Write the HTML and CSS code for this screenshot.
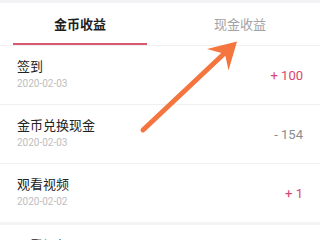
FILE: index.html
```html
<!DOCTYPE html>
<html lang="zh">
<head>
<meta charset="utf-8">
<link rel="stylesheet" href="styles.css">
</head>
<body>
<div class="page">
  <div class="top-gap"></div>
  <div class="tabs">
    <div class="tab active">金币收益</div>
    <div class="tab">现金收益</div>
  </div>
  <div class="list">
    <div class="row">
      <div class="info">
        <div class="title">签到</div>
        <div class="date">2020-02-03</div>
      </div>
      <div class="amount plus">+ 100</div>
    </div>
    <div class="row">
      <div class="info">
        <div class="title">金币兑换现金</div>
        <div class="date">2020-02-03</div>
      </div>
      <div class="amount minus">- 154</div>
    </div>
    <div class="row thick">
      <div class="info">
        <div class="title">观看视频</div>
        <div class="date">2020-02-02</div>
      </div>
      <div class="amount plus">+ 1</div>
    </div>
    <div class="row">
      <div class="info">
        <div class="title">观看视频</div>
        <div class="date">2020-02-02</div>
      </div>
      <div class="amount plus">+ 1</div>
    </div>
  </div>
  <svg class="arrow" width="320" height="240" viewBox="0 0 320 240">
    <line x1="143" y1="130" x2="229" y2="49" stroke="#f5753f" stroke-width="5" stroke-linecap="round"/>
    <polygon points="237,41.5 207,49 225,54 228.5,70.5" fill="#f5753f"/>
  </svg>
</div>
</body>
</html>
```
FILE: styles.css
```css
html, body {
  margin: 0;
  padding: 0;
  background: #ffffff;
}
.page {
  position: relative;
  width: 320px;
  height: 240px;
  overflow: hidden;
  font-family: "Noto Sans CJK SC", "Noto Sans", sans-serif;
}
.top-gap {
  height: 3px;
  background: #f3f3f5;
}
.tabs {
  display: flex;
  border-bottom: 1px solid #efefef;
}
.tab {
  flex: 1;
  margin: 0 13px;
  height: 40px;
  display: flex;
  align-items: center;
  justify-content: center;
  font-size: 13px;
  color: #a3a3a3;
  border-bottom: 2px solid transparent;
}
.tab.active {
  color: #1e1e1e;
  font-weight: bold;
  border-bottom-color: #d9576f;
}
.row {
  height: 58px;
  display: flex;
  align-items: center;
  justify-content: space-between;
  padding: 0 17px;
  border-bottom: 1px solid #f0f0f0;
}
.row.thick {
  border-bottom: 3px solid #f4f4f4;
}
.info {
  align-self: flex-start;
  padding-top: 11px;
}
.title {
  font-size: 13px;
  line-height: 18px;
  color: #222222;
}
.date {
  margin-top: 2px;
  font-size: 10px;
  line-height: 14px;
  color: #bdbdbd;
  font-family: "Roboto", "Noto Sans", sans-serif;
}
.amount {
  font-size: 13px;
  font-family: "Roboto", "Noto Sans", sans-serif;
}
.amount.plus {
  color: #d8466c;
}
.amount.minus {
  color: #8c8c8c;
}
.arrow {
  position: absolute;
  left: 0;
  top: 0;
  pointer-events: none;
}
```
